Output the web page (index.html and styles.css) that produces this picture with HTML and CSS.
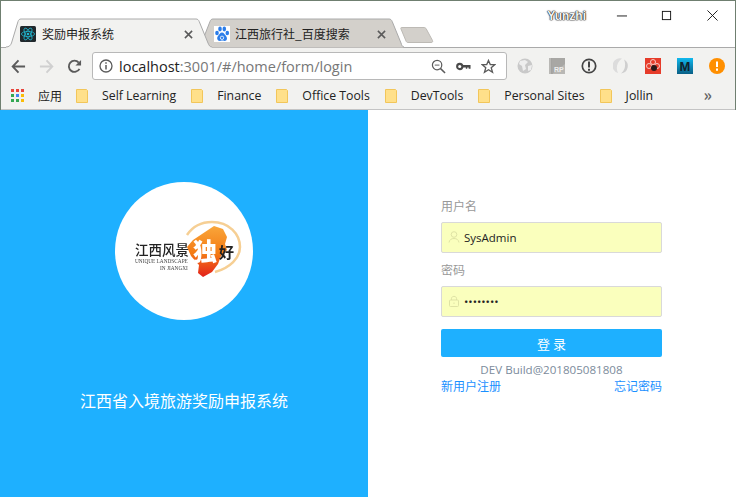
FILE: index.html
```html
<!DOCTYPE html>
<html lang="zh">
<head>
<meta charset="utf-8">
<title>奖励申报系统</title>
<link rel="stylesheet" href="styles.css">
</head>
<body>
<div class="page">
  <header class="browser">
    <div class="titlebar">
      <div class="tabs">
        <div class="tab tab-active">
          <svg class="tab-shape" viewBox="0 0 206 30"><path d="M0 29C3 29 4.500 27.500 5.500 25L12 3.500C12.600 1.800 13.500 1 15 1H190C191.500 1 192.500 1.800 193.200 3.500L202 25C203 27.500 204 29 206 29V30H0Z" fill="#f2f2f0"/><path d="M0 29C3 29 4.500 27.500 5.500 25L12 3.500C12.600 1.800 13.500 1 15 1H190C191.500 1 192.500 1.800 193.200 3.500L202 25C203 27.500 204 29 206 29" fill="none" stroke="#aaa"/></svg>
          <svg class="favicon" viewBox="0 0 16 16"><rect width="16" height="16" rx="1.500" fill="#20282c"/><g fill="none" stroke="#1fb6cf" stroke-width=".8"><ellipse cx="8" cy="8" rx="6.600" ry="2.600"/><ellipse cx="8" cy="8" rx="6.600" ry="2.600" transform="rotate(60 8 8)"/><ellipse cx="8" cy="8" rx="6.600" ry="2.600" transform="rotate(120 8 8)"/></g><circle cx="8" cy="8" r="1.300" fill="#1fb6cf"/></svg>
          <span class="tab-title">奖励申报系统</span>
          <svg class="tab-close" viewBox="0 0 10 10"><path d="M1 1L9 9M9 1L1 9" stroke="#5a5a5a" stroke-width="1.700"/></svg>
        </div>
        <div class="tab tab-other">
          <svg class="tab-shape" viewBox="0 0 206 30"><path d="M0 29L10 3.500C10.600 1.800 11.500 1 13 1H189C190.500 1 191.500 1.800 192.200 3.500L201 25C201.800 27.500 202.500 29 204 29V30H0Z" fill="#d3d0cb" stroke="#aaa"/></svg>
          <svg class="favicon" viewBox="0 0 16 16"><rect width="16" height="16" fill="#fff"/><g fill="#2b7de9"><ellipse cx="3" cy="7" rx="1.800" ry="2.300"/><ellipse cx="6" cy="3" rx="1.800" ry="2.400"/><ellipse cx="10.300" cy="3" rx="1.800" ry="2.400"/><ellipse cx="13.300" cy="7" rx="1.800" ry="2.300"/><path d="M8 6.500C6 6.500 5.500 8.500 4 10C2.500 11.500 3 15 6 15C7 15 7.500 14.600 8 14.600C8.500 14.600 9.500 15 10.500 15C13.500 15 13.500 11.500 12 10C10.500 8.500 10 6.500 8 6.500Z"/></g><circle cx="8" cy="11.800" r="1.700" fill="none" stroke="#fff" stroke-width=".8"/></svg>
          <span class="tab-title">江西旅行社_百度搜索</span>
          <svg class="tab-close" viewBox="0 0 10 10"><path d="M1 1L9 9M9 1L1 9" stroke="#5a5a5a" stroke-width="1.700"/></svg>
        </div>
        <svg class="newtab" viewBox="0 0 34 18"><path d="M1.500 1.500H24C25 1.500 25.800 2 26.300 3L32.500 14.500C33 15.800 32.500 16.500 31 16.500H8C7 16.500 6.500 16 6 15L1 3C.6 2 .8 1.500 1.500 1.500Z" fill="#d3d0cb" stroke="#bdbab5"/></svg>
      </div>
      <div class="window">
        <span class="user">Yunzhi</span>
        <svg class="winbtn" viewBox="0 0 12 12"><path d="M1 6.500H12" stroke="#111"/></svg>
        <svg class="winbtn" viewBox="0 0 12 12"><rect x="1.500" y="1.500" width="9" height="9" fill="none" stroke="#111"/></svg>
        <svg class="winbtn" viewBox="0 0 12 12"><path d="M.5 .5L11.500 11.500M11.500 .5L.5 11.500" stroke="#111"/></svg>
      </div>
    </div>
    <div class="toolbar">
      <svg class="nav" viewBox="0 0 16 16"><path d="M15 8H2M8 1.500L1.800 8L8 14.500" fill="none" stroke="#5b5b5b" stroke-width="2"/></svg>
      <svg class="nav" viewBox="0 0 16 16"><path d="M1 8H14M8 1.500L14.200 8L8 14.500" fill="none" stroke="#d0d0d0" stroke-width="2"/></svg>
      <svg class="nav" viewBox="0 0 16 16"><path d="M13.300 10.500A6 6 0 1 1 12.500 3.800" fill="none" stroke="#5b5b5b" stroke-width="2"/><path d="M15 1V7H9Z" fill="#5b5b5b"/></svg>
      <div class="omnibox">
        <svg class="info" viewBox="0 0 14 14"><circle cx="7" cy="7" r="6" fill="none" stroke="#5b5b5b" stroke-width="1.300"/><path d="M7 6V10.500M7 3.300V4.800" stroke="#5b5b5b" stroke-width="1.500"/></svg>
        <span class="url"><span class="url-host">localhost</span>:3001/#/home/form/login</span>
        <svg class="omni-icon" viewBox="0 0 16 16"><circle cx="6.500" cy="6.500" r="5" fill="none" stroke="#5b5b5b" stroke-width="1.300"/><path d="M10 10L15 15" stroke="#5b5b5b" stroke-width="1.600"/><path d="M4 6.500H9" stroke="#5b5b5b"/></svg>
        <svg class="omni-icon" viewBox="0 0 16 16"><circle cx="4" cy="8" r="2.800" fill="none" stroke="#4a4a4a" stroke-width="2.200"/><path d="M6.500 6.500H15.500V10.500H13.500V9H12V10.500H10.500V9H6.500Z" fill="#4a4a4a"/></svg>
        <svg class="omni-icon" viewBox="0 0 16 16"><path d="M8 1.500L9.900 6H14.800L10.900 9.200L12.300 14.200L8 11.400L3.700 14.200L5.100 9.200L1.200 6H6.100Z" fill="none" stroke="#5b5b5b" stroke-width="1.400"/></svg>
      </div>
      <div class="extensions">
        <svg class="ext" viewBox="0 0 16 16"><circle cx="8" cy="8" r="7.500" fill="#c9c9c9"/><path d="M3 3L8 2L11 4L8 7L9 11L6 13L5 8L2 6Z" fill="#eee"/><path d="M11 8L15 7L14 12L11 13Z" fill="#eee"/></svg>
        <svg class="ext" viewBox="0 0 16 16"><rect width="16" height="16" fill="#b9b8b5"/><path d="M3 0V16" stroke="#8f8e8b" stroke-width="1"/><path d="M3 0H16V6L3 16Z" fill="#a8a7a4"/><text x="5" y="14" class="ext-rp">RP</text></svg>
        <svg class="ext" viewBox="0 0 16 16"><circle cx="8" cy="8" r="6.700" fill="none" stroke="#444" stroke-width="1.700"/><path d="M8 3.500V9.500M8 10.800V12.800" stroke="#444" stroke-width="2"/></svg>
        <svg class="ext" viewBox="0 0 16 16"><path d="M9 .5A7.500 7.500 0 0 0 5 15C2.500 10 4 4 9 .5Z" fill="#dcdcdc"/><path d="M8 15.500A7.500 7.500 0 0 0 11 1.500C13 6 12.500 12 8 15.500Z" fill="#cfcfcf"/></svg>
        <svg class="ext" viewBox="0 0 16 16"><rect width="16" height="16" fill="#e63c2a"/><g fill="none" stroke="#f7c9c2" stroke-width="1"><circle cx="8" cy="4" r="2.500"/><circle cx="4" cy="8" r="2.500"/><circle cx="12" cy="8" r="2.500"/></g><circle cx="9" cy="10" r="3" fill="#2a1a1a"/></svg>
        <svg class="ext" viewBox="0 0 16 16"><defs><linearGradient id="mg" x1="0" y1="0" x2="0" y2="1"><stop offset="0" stop-color="#10b8ee"/><stop offset="1" stop-color="#0a5f86"/></linearGradient></defs><rect width="16" height="16" fill="url(#mg)"/><text x="8" y="13" class="ext-m">M</text></svg>
        <svg class="ext" viewBox="0 0 16 16"><circle cx="8" cy="8" r="8" fill="#ff8f00"/><path d="M8 3.500V9M8 10.500V12.800" stroke="#fff" stroke-width="2"/></svg>
      </div>
    </div>
    <nav class="bookmarks">
      <svg class="apps" viewBox="0 0 13 13"><g fill="#e8453c"><rect width="3" height="3"/><rect x="5" width="3" height="3"/><rect x="10" width="3" height="3"/></g><g fill="#34a853"><rect y="5" width="3" height="3"/><rect y="10" width="3" height="3"/><rect x="5" y="10" width="3" height="3"/></g><g fill="#4285f4"><rect x="5" y="5" width="3" height="3"/></g><g fill="#fbbc05"><rect x="10" y="5" width="3" height="3"/><rect x="10" y="10" width="3" height="3"/></g></svg>
      <span class="bm-text bm-apps">应用</span>
      <a class="bm"><svg class="folder" viewBox="0 0 12 14"><path d="M.5 .5H10.500L11.500 1.500V13.500H.5Z" fill="#ffe08a" stroke="#f2c65a"/></svg><span class="bm-text">Self Learning</span></a>
      <a class="bm"><svg class="folder" viewBox="0 0 12 14"><path d="M.5 .5H10.500L11.500 1.500V13.500H.5Z" fill="#ffe08a" stroke="#f2c65a"/></svg><span class="bm-text">Finance</span></a>
      <a class="bm"><svg class="folder" viewBox="0 0 12 14"><path d="M.5 .5H10.500L11.500 1.500V13.500H.5Z" fill="#ffe08a" stroke="#f2c65a"/></svg><span class="bm-text">Office Tools</span></a>
      <a class="bm"><svg class="folder" viewBox="0 0 12 14"><path d="M.5 .5H10.500L11.500 1.500V13.500H.5Z" fill="#ffe08a" stroke="#f2c65a"/></svg><span class="bm-text">DevTools</span></a>
      <a class="bm"><svg class="folder" viewBox="0 0 12 14"><path d="M.5 .5H10.500L11.500 1.500V13.500H.5Z" fill="#ffe08a" stroke="#f2c65a"/></svg><span class="bm-text">Personal Sites</span></a>
      <a class="bm"><svg class="folder" viewBox="0 0 12 14"><path d="M.5 .5H10.500L11.500 1.500V13.500H.5Z" fill="#ffe08a" stroke="#f2c65a"/></svg><span class="bm-text">Jollin</span></a>
      <span class="more">»</span>
    </nav>
  </header>
  <main class="app">
    <section class="brand">
      <div class="logo">
        <svg class="logo-art" viewBox="0 0 138 138">
          <defs><linearGradient id="mapg" x1="0" y1="0" x2="0" y2="1"><stop offset="0" stop-color="#f9a63a"/><stop offset=".55" stop-color="#f47a14"/><stop offset="1" stop-color="#e3201b"/></linearGradient></defs>
          <path d="M72 53C78 44 87 40 97 40C114 40 125 52 125 65C125 76 115 86 100 90" fill="none" stroke="#f6cf94" stroke-width="2.500"/>
          <path d="M99 44L108 47L112 55L110 62L112 68L106 74L103 82L97 90L88 95L83 91L84 83L76 74L72 65L78 58L87 52Z" fill="url(#mapg)"/>
          <text x="20" y="73" class="logo-cn">江西风景</text>
          <text x="78" y="78" class="logo-du">独</text>
          <text x="104" y="76" class="logo-hao">好</text>
          <text x="20" y="81" class="logo-en">UNIQUE LANDSCAPE</text>
          <text x="45" y="88" class="logo-en">IN JIANGXI</text>
        </svg>
      </div>
      <h1 class="brand-title">江西省入境旅游奖励申报系统</h1>
    </section>
    <section class="panel">
      <form class="form">
        <label class="label">用户名</label>
        <div class="field">
          <svg class="field-icon" viewBox="0 0 12 12"><circle cx="6" cy="3.500" r="2.800" fill="none" stroke="#dfe3a5"/><path d="M1 11.500C1.500 8.500 3.500 7.500 6 7.500C8.500 7.500 10.500 8.500 11 11.500" fill="none" stroke="#dfe3a5"/></svg>
          <input class="input" type="text" value="SysAdmin">
        </div>
        <label class="label label-2">密码</label>
        <div class="field">
          <svg class="field-icon" viewBox="0 0 12 12"><rect x="1.500" y="5" width="9" height="6.500" rx="1" fill="none" stroke="#dfe3a5"/><path d="M3.500 5V3.300C3.500 .8 8.500 .8 8.500 3.300V5M6 7.500V9" fill="none" stroke="#dfe3a5"/></svg>
          <input class="input" type="password" value="password">
        </div>
        <button class="submit" type="button">登 录</button>
        <p class="build">DEV Build@201805081808</p>
        <div class="links"><a class="link">新用户注册</a><a class="link">忘记密码</a></div>
      </form>
    </section>
  </main>
</div>
</body>
</html>
```
FILE: styles.css
```css
* { box-sizing: border-box; }
html, body { margin: 0; padding: 0; }
body { background: #fff; font-family: "Noto Sans CJK SC", "Liberation Sans", sans-serif; }
.page { width: 736px; height: 497px; overflow: hidden; display: flex; flex-direction: column; }

.browser { height: 110px; flex: none; display: flex; flex-direction: column; border-top: 1px solid #6f7f70; border-left: 1px solid #6f7f70; border-right: 1px solid #6f7f70; }
.titlebar { height: 46px; flex: none; display: flex; background: #fff; position: relative; }
.tabs { display: flex; align-items: flex-start; padding: 17px 0 0 5px; position: relative; flex: 1; }
.tab { width: 206px; height: 30px; position: relative; display: flex; align-items: center; flex: none; padding-top: 2px; }
.tab-shape { position: absolute; left: 0; top: 0; width: 206px; height: 30px; }
.tab-active { z-index: 2; padding-left: 14px; }
.tab-other { z-index: 1; margin-left: -12px; padding-left: 14px; }
.favicon { width: 16px; height: 16px; position: relative; flex: none; }
.tab-title { position: relative; font-size: 12px; line-height: 16px; color: #222; margin-left: 6px; white-space: nowrap; width: 140px; }
.tab-other .tab-title { margin-left: 5px; }
.tab-close { position: relative; width: 9px; height: 9px; flex: none; }
.tab-active .tab-close { margin-left: 2px; }
.tab-other .tab-close { margin-left: 2px; }
.newtab { width: 34px; height: 18px; margin: 8px 0 0 -6px; flex: none; }
.window { position: absolute; right: 0; top: 0; display: flex; align-items: flex-start; }
.user { font-family: "Liberation Sans", sans-serif; font-size: 12px; font-weight: 700; color: #f4f4f4; text-shadow: 0 0 1px #222, 0 0 1px #222, 0 0 1px #222, 0 0 2px #777; position: absolute; right: 149px; top: 8px; }
.winbtn { width: 11px; height: 11px; margin: 9px 17px 0; flex: none; }
.winbtn:last-child { margin-left: 18px; }

.toolbar { height: 37px; flex: none; background: #f2f2f0; border-top: 1px solid #aaa; display: flex; align-items: center; padding: 0 0 0 10px; }
.nav { width: 15px; height: 15px; margin-right: 13px; flex: none; }
.omnibox { width: 415px; height: 28px; margin-left: -3px; flex: none; background: #fff; border: 1px solid #b8b8b8; border-radius: 3px; display: flex; align-items: center; padding-left: 6px; }
.info { width: 14px; height: 14px; flex: none; }
.url { font-family: "Open Sans", sans-serif; font-size: 14.500px; color: #777; margin-left: 6px; width: 321px; white-space: nowrap; }
.url-host { color: #222; }
.omni-icon { width: 15px; height: 15px; margin-right: 10px; flex: none; }
.extensions { display: flex; margin-left: 10px; gap: 16px; }
.ext { width: 16px; height: 16px; flex: none; }
.ext-rp { font-family: "Liberation Sans", sans-serif; font-size: 7px; font-weight: 700; fill: #eee; }
.ext-m { font-family: "Liberation Sans", sans-serif; font-size: 13px; font-weight: 700; fill: #10222c; text-anchor: middle; }

.bookmarks { height: 26px; flex: none; background: #f2f2f0; border-bottom: 1px solid #c4c4c4; display: flex; align-items: center; padding: 0 0 2px 10px; }
.apps { width: 13px; height: 13px; flex: none; }
.bm { display: flex; align-items: center; gap: 14px; margin-left: 15px; }
.folder { width: 12px; height: 14px; flex: none; }
.bm-text { font-family: "Open Sans", sans-serif; font-size: 12.300px; color: #222; white-space: nowrap; }
.bm-apps { font-family: "Noto Sans CJK SC", sans-serif; font-size: 12px; margin: 0 -1px 0 14px; }
.more { margin-left: auto; margin-right: 23px; font-size: 16px; font-weight: 700; color: #666; line-height: 14px; padding-bottom: 3px; }

.app { flex: 1; display: flex; min-height: 0; }
.brand { width: 368px; flex: none; background: #1eb0ff; display: flex; flex-direction: column; align-items: center; padding-top: 72px; }
.logo { width: 138px; height: 138px; border-radius: 50%; background: #fff; overflow: hidden; }
.logo-art { width: 138px; height: 138px; display: block; filter: blur(.3px); }
.logo-cn { font-family: "Noto Sans CJK SC", sans-serif; font-size: 13.500px; font-weight: 500; fill: #222; }
.logo-du { font-family: "Noto Sans CJK SC", sans-serif; font-size: 24px; font-weight: 900; fill: #fff; }
.logo-hao { font-family: "Noto Sans CJK SC", sans-serif; font-size: 15px; font-weight: 700; fill: #222; }
.logo-en { font-family: "Liberation Serif", serif; font-size: 5.300px; fill: #444; }
.brand-title { margin: 69px 0 0; font-size: 16px; line-height: 22px; font-weight: 400; color: #fff; }

.panel { flex: 1; background: #fff; padding: 87px 0 0 73px; }
.form { width: 221px; display: flex; flex-direction: column; }
.label { font-size: 12px; line-height: 18px; color: #999; margin-bottom: 7px; }
.label-2 { margin-top: 8px; }
.field { position: relative; height: 31px; }
.input { display: block; width: 100%; height: 31px; border: 1px solid #d9d9d9; border-radius: 2px; background: #faffbd; padding: 0 8px 0 22px; font-family: "Open Sans", sans-serif; font-size: 11.500px; color: #222; outline: none; }
.field-icon { position: absolute; left: 7px; top: 9px; width: 12px; height: 12px; }
.submit { height: 28px; margin-top: 12px; border: 0; border-radius: 2px; background: #1eb0ff; color: #fff; font-family: "Noto Sans CJK SC", sans-serif; font-size: 13px; padding: 0; }
.build { margin: 5px 0 0; text-align: center; font-family: "Open Sans", sans-serif; font-size: 11.600px; line-height: 16px; color: #7c8b9c; }
.links { display: flex; justify-content: space-between; }
.link { font-size: 12px; line-height: 16px; color: #1a90ff; }
```
